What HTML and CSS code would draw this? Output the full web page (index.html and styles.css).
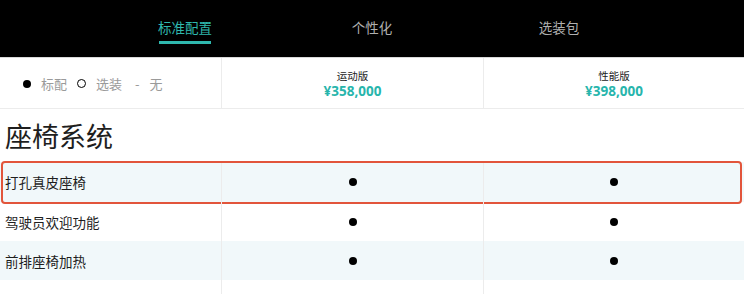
FILE: index.html
```html
<!DOCTYPE html>
<html lang="zh-CN">
<head>
<meta charset="utf-8">
<title>配置表</title>
<link rel="stylesheet" href="styles.css">
</head>
<body>
<div class="page">
  <nav class="tabs">
    <div class="tab active"><span class="tab-label">标准配置</span></div>
    <div class="tab"><span class="tab-label">个性化</span></div>
    <div class="tab"><span class="tab-label">选装包</span></div>
  </nav>
  <div class="head-row">
    <div class="cell legend">
      <span class="dot legend-dot"></span><span class="legend-text">标配</span>
      <span class="ring"></span><span class="legend-text">选装</span>
      <span class="legend-text dash">-</span><span class="legend-text">无</span>
    </div>
    <div class="cell model">
      <div class="model-name">运动版</div>
      <div class="model-price">¥358,000</div>
    </div>
    <div class="cell model">
      <div class="model-name">性能版</div>
      <div class="model-price">¥398,000</div>
    </div>
  </div>
  <h2 class="section-title">座椅系统</h2>
  <div class="rows">
    <div class="row shaded highlight">
      <div class="cell name">打孔真皮座椅</div>
      <div class="cell val"><span class="dot"></span></div>
      <div class="cell val"><span class="dot"></span></div>
    </div>
    <div class="row">
      <div class="cell name">驾驶员欢迎功能</div>
      <div class="cell val"><span class="dot"></span></div>
      <div class="cell val"><span class="dot"></span></div>
    </div>
    <div class="row shaded">
      <div class="cell name">前排座椅加热</div>
      <div class="cell val"><span class="dot"></span></div>
      <div class="cell val"><span class="dot"></span></div>
    </div>
    <div class="row">
      <div class="cell name">前排座椅通风功能</div>
      <div class="cell val"><span class="ring"></span></div>
      <div class="cell val"><span class="dot"></span></div>
    </div>
  </div>
</div>
</body>
</html>
```

FILE: styles.css
```css
* { box-sizing: border-box; }
html, body { margin: 0; padding: 0; background: #fff; }
body {
  font-family: "Noto Sans CJK SC", "Noto Sans", sans-serif;
  color: #222;
  overflow: hidden;
}
.page { width: 744px; }

.tabs {
  height: 57px;
  background: #000;
  display: flex;
  justify-content: center;
}
.tab {
  width: 187px;
  display: flex;
  justify-content: center;
}
.tab-label {
  position: relative;
  font-size: 13.5px;
  line-height: 20px;
  padding-top: 17px;
  color: #b0b0b0;
  height: 57px;
  display: block;
}
.tab.active .tab-label { color: #2fb8ae; }
.tab.active .tab-label::after {
  content: "";
  position: absolute;
  left: 1px;
  right: 1px;
  top: 41px;
  height: 3px;
  background: #2fb8ae;
}

.head-row {
  display: grid;
  grid-template-columns: 221px 262px 1fr;
  height: 52px;
  border-top: 1px solid #d9d9d9;
  border-bottom: 1px solid #ececec;
}
.cell { border-left: 1px solid #ececec; }
.cell:first-child { border-left: none; }

.legend {
  display: flex;
  align-items: center;
  padding-left: 23px;
  padding-top: 1px;
  font-size: 13px;
  color: #9a9a9a;
}
.legend-dot { width: 9px; height: 9px; margin-right: 10px; }
.legend .ring { margin-left: 10px; margin-right: 10px; }
.legend .dash { margin-left: 13px; margin-right: 10px; }

.model {
  display: flex;
  flex-direction: column;
  align-items: center;
  justify-content: center;
  padding-top: 3px;
}
.model-name {
  font-size: 10.5px;
  line-height: 14px;
  color: #222;
}
.model-price {
  font-family: "Open Sans", "Noto Sans", sans-serif;
  font-weight: 700;
  font-size: 13.5px;
  line-height: 17px;
  color: #27b5ac;
}

.section-title {
  margin: 0;
  height: 53px;
  padding-left: 5px;
  padding-top: 9px;
  font-size: 27px;
  line-height: 36px;
  font-weight: 400;
  color: #1e1e1e;
}

.rows { display: flex; flex-direction: column; }
.row {
  position: relative;
  display: grid;
  grid-template-columns: 221px 262px 1fr;
  height: 39px;
}
.row.shaded { background: #f1f8fa; }
.row.highlight { height: 40px; }
.row.highlight::after {
  content: "";
  position: absolute;
  left: 1px;
  right: 2px;
  top: -1px;
  bottom: -2px;
  border: 2px solid #e2553b;
  border-radius: 4px;
  pointer-events: none;
}
.row .cell { display: flex; align-items: center; }
.name {
  padding-left: 5px;
  font-size: 13.5px;
  color: #1e1e1e;
}
.val { justify-content: center; }

.dot {
  display: inline-block;
  width: 8px;
  height: 8px;
  border-radius: 50%;
  background: #000;
}
.ring {
  display: inline-block;
  width: 9px;
  height: 9px;
  border-radius: 50%;
  border: 1.5px solid #000;
}
```
